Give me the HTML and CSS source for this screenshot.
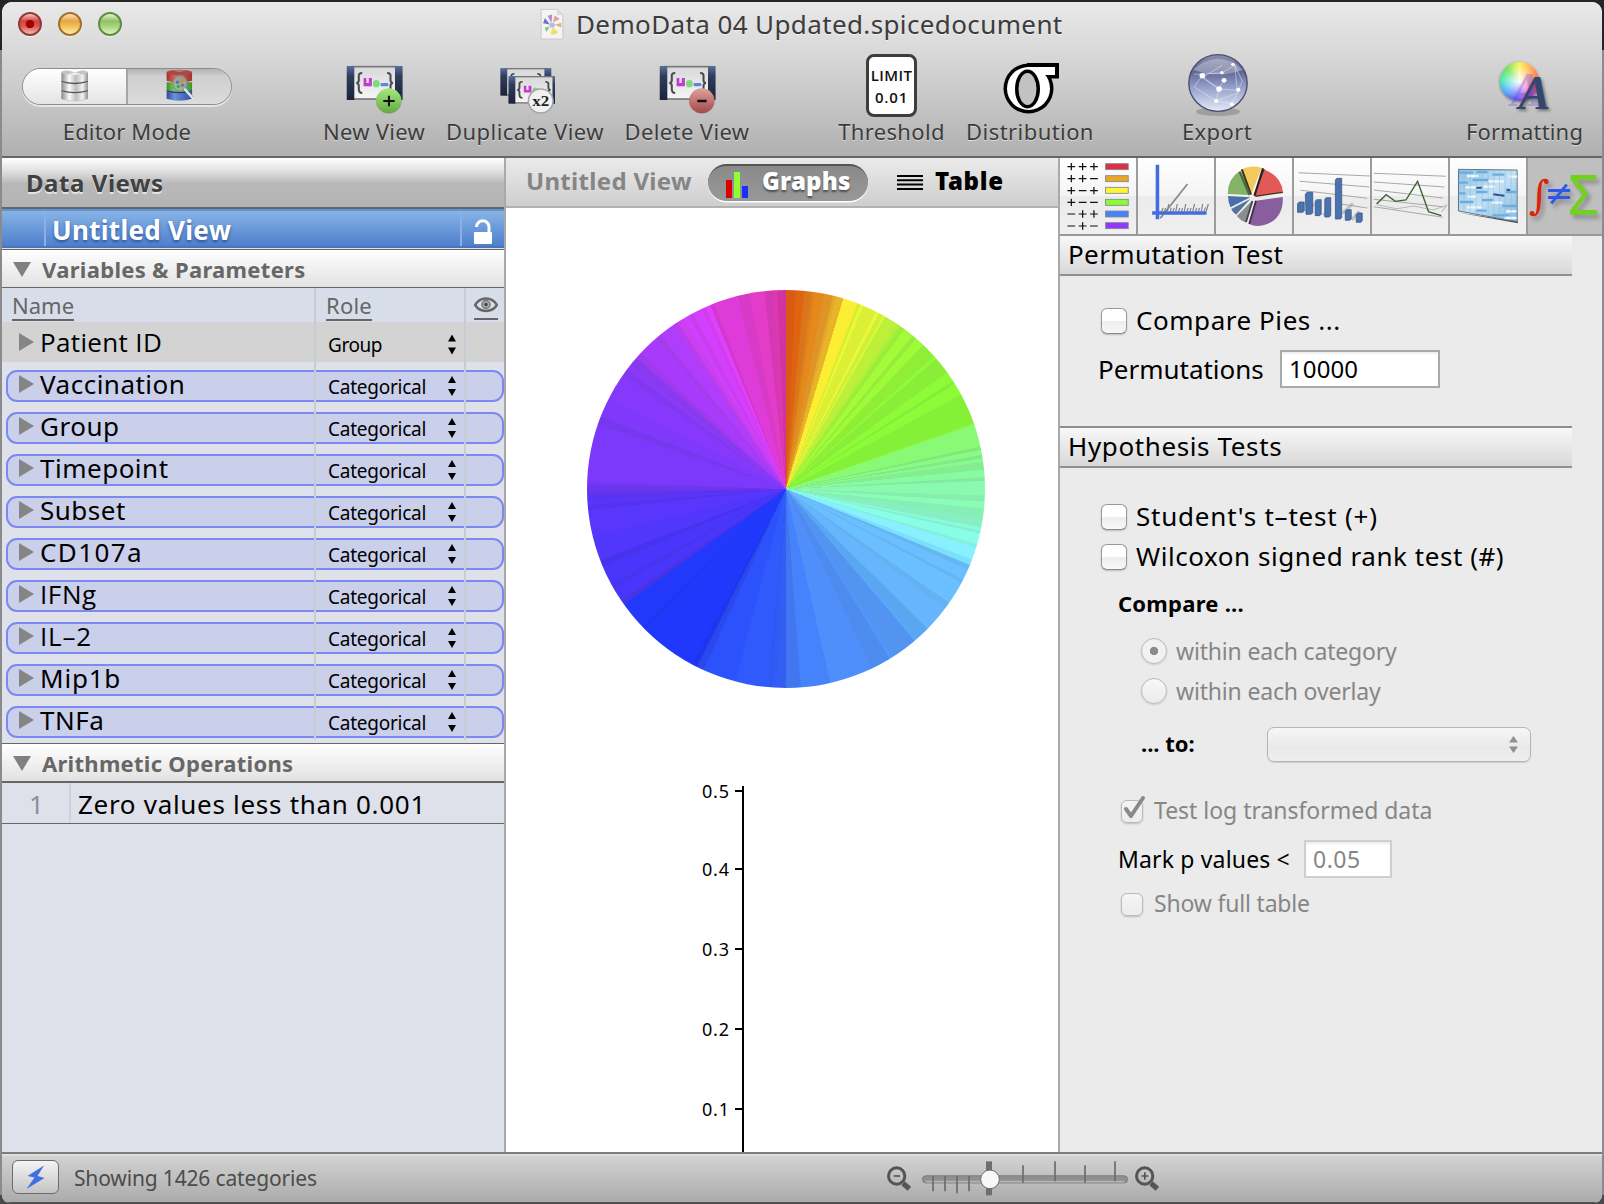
FILE: index.html
```
<!DOCTYPE html>
<html lang="en">
<head>
<meta charset="utf-8">
<title>DemoData 04 Updated.spicedocument</title>
<link rel="stylesheet" href="styles.css">
</head>
<body>
<svg class="defs" width="0" height="0" aria-hidden="true">
  <defs>
    <linearGradient id="navy" x1="0" x2="0" y1="0" y2="1"><stop offset="0" stop-color="#5b6f98"/><stop offset=".3" stop-color="#2e3d5e"/><stop offset="1" stop-color="#1b2338"/></linearGradient>
    <linearGradient id="paper" x1="0" x2="0" y1="0" y2="1"><stop offset="0" stop-color="#d8d8da"/><stop offset="1" stop-color="#f6f6f6"/></linearGradient>
    <linearGradient id="green" x1="0" x2="0" y1="0" y2="1"><stop offset="0" stop-color="#a4ea7c"/><stop offset="1" stop-color="#66a944"/></linearGradient>
    <linearGradient id="rose" x1="0" x2="0" y1="0" y2="1"><stop offset="0" stop-color="#e2a09c"/><stop offset="1" stop-color="#a04b4a"/></linearGradient>
    <linearGradient id="steel" x1="0" x2="1" y1="0" y2="0"><stop offset="0" stop-color="#8a8a8a"/><stop offset=".3" stop-color="#fafafa"/><stop offset=".55" stop-color="#bdbdbd"/><stop offset=".8" stop-color="#f2f2f2"/><stop offset="1" stop-color="#8d8d8d"/></linearGradient>
    <linearGradient id="cred" x1="0" x2="1" y1="0" y2="0"><stop offset="0" stop-color="#a52f2b"/><stop offset=".3" stop-color="#d8605a"/><stop offset="1" stop-color="#a9322e"/></linearGradient>
    <linearGradient id="cgreen" x1="0" x2="1" y1="0" y2="0"><stop offset="0" stop-color="#3c8f2b"/><stop offset=".3" stop-color="#74cf52"/><stop offset="1" stop-color="#41962e"/></linearGradient>
    <linearGradient id="cblue" x1="0" x2="1" y1="0" y2="0"><stop offset="0" stop-color="#2a4b97"/><stop offset=".3" stop-color="#6d90dc"/><stop offset="1" stop-color="#2c4e9c"/></linearGradient>
    <linearGradient id="globe" x1="0" x2="0" y1="0" y2="1"><stop offset="0" stop-color="#8b8fab"/><stop offset=".3" stop-color="#5f6793"/><stop offset=".55" stop-color="#8f9bc4"/><stop offset="1" stop-color="#e3ebfa"/></linearGradient>
    <linearGradient id="heat" x1="0" x2="1" y1="0" y2="1"><stop offset="0" stop-color="#8fc0e2"/><stop offset=".5" stop-color="#c5e1f3"/><stop offset="1" stop-color="#86bce2"/></linearGradient>
    <g id="view">
      <rect x="1020" y="200" width="130" height="97" fill="url(#paper)" stroke="#77787c" stroke-width="5"/>
      <rect x="1005" y="198" width="22" height="102" fill="url(#navy)"/>
      <rect x="1145" y="198" width="22" height="102" fill="url(#navy)"/>
      <path d="M1050 219q-12 0-10 12v10q0 7-7 8q7 1 7 8v10q0 12 10 12M1122 219q12 0 10 12v10q0 7 7 8q-7 1-7 8v10q0 12-10 12" fill="none" stroke="#4b4b4f" stroke-width="6"/>
      <path d="M1054 234h8v15h7v-15h9v25h-24z" fill="#c33bd0"/>
      <ellipse cx="1091" cy="251" rx="10" ry="11" fill="#7ddc7a"/>
      <rect x="1103" y="249" width="23" height="10" rx="4" fill="#5d86d8"/>
    </g>
  </defs>
</svg>

<div class="window">
  <header class="chrome">
    <div class="titlebar">
      <div class="lights"><i class="light close"></i><i class="light min"></i><i class="light zoom"></i></div>
      <div class="title">
        <svg class="doc" viewBox="158 25 63 95" preserveAspectRatio="none"><path d="M161 29h42l15 16v72h-57z" fill="#f4f4f4" stroke="#bdbdbd" stroke-width="2"/><path d="M203 29v16h15" fill="#ddd" stroke="#c8c8c8"/><path d="M188 70l-10-22 12-4z" fill="#b18bd0"/><path d="M192 69l4-22 14 10z" fill="#e9a1a0"/><path d="M184 74l-18-4 5-15z" fill="#6a74c8"/><path d="M196 75l18-6v14z" fill="#e5b27c"/><path d="M184 80l-14 4 5 12z" fill="#84c37c"/><path d="M190 82l-4 20q12 6 20-6z" fill="#ece06a"/><ellipse cx="190" cy="76" rx="7" ry="7" fill="#b4bbe4"/></svg>
        <span class="title-text">DemoData 04 Updated.spicedocument</span>
      </div>
    </div>
    <div class="toolbar">
      <div class="tool t-mode">
        <div class="segment">
          <div class="seg">
            <svg class="db" viewBox="176 204 88 98" preserveAspectRatio="none"><path d="M180 282v12q39 12 78 0v-18z" fill="#777" opacity=".35"/><path d="M180 270v22q39 12 78 0v-22z" fill="url(#steel)"/><path d="M180 243v23q39 12 78 0v-23z" fill="url(#steel)"/><path d="M180 214v25q39 12 78 0v-25z" fill="url(#steel)"/><path d="M180 241q39 12 78 0M180 268q39 12 78 0" stroke="#555" stroke-width="4" fill="none"/><ellipse cx="219" cy="214" rx="39" ry="8" fill="#c4c4c4"/><path d="M219 214l-24-7h48z" fill="#fff"/><path d="M219 214l-22 7h44z" fill="#f3f3f3"/></svg>
          </div>
          <div class="seg on">
            <svg class="db" viewBox="472 204 92 98" preserveAspectRatio="none"><path d="M477 270v22q39 12 78 0v-22z" fill="url(#cblue)"/><path d="M477 243v23q39 12 78 0v-23z" fill="url(#cgreen)"/><path d="M477 214v25q39 12 78 0v-25z" fill="url(#cred)"/><path d="M477 268q39 12 78 0" stroke="#263a63" stroke-width="4" fill="none"/><ellipse cx="516" cy="214" rx="39" ry="8" fill="#a54b47"/><path d="M516 214l-24-7h48z" fill="#c86e69"/><ellipse cx="518" cy="247" rx="21" ry="23" fill="#9db8ac" fill-opacity=".75" stroke="#8c8f8f" stroke-width="4"/><circle cx="510" cy="243" r="5" fill="#4d6fc0"/><circle cx="523" cy="239" r="5" fill="#d08a38"/><circle cx="526" cy="252" r="5" fill="#b84cb0"/><circle cx="513" cy="256" r="5" fill="#4aa54e"/><path d="M534 265l24 26" stroke="#d6e6ee" stroke-width="8" stroke-linecap="round"/><path d="M538 262l22 26" stroke="#7a93a0" stroke-width="2"/></svg>
          </div>
        </div>
        <span class="label l-mode">Editor Mode</span>
      </div>
      <div class="tool t-new">
        <svg class="ico v-new" viewBox="1000 192 174 150" preserveAspectRatio="none"><use href="#view"/><ellipse cx="1127" cy="304" rx="37" ry="37" fill="#000" opacity=".2"/><ellipse cx="1127" cy="302" rx="37" ry="37" fill="url(#green)"/><path d="M1111 303h33M1127.500 287v32" stroke="#111" stroke-width="6"/></svg>
        <span class="label l-new">New View</span>
      </div>
      <div class="tool t-dup">
        <svg class="ico v-dup" viewBox="46 198 148 147" preserveAspectRatio="none"><g transform="translate(-769 44) scale(.817 .81)"><use href="#view"/></g><g transform="translate(-748 68) scale(.817 .81)"><use href="#view"/></g><ellipse cx="157" cy="303" rx="32" ry="36" fill="#f1f1f1" stroke="#a5a5a5" stroke-width="4"/><text x="157" y="317" text-anchor="middle" font-family="Liberation Serif, serif" font-weight="700" font-size="44" textLength="44" lengthAdjust="spacingAndGlyphs" fill="#222">x2</text></svg>
        <span class="label l-dup">Duplicate View</span>
      </div>
      <div class="tool t-del">
        <svg class="ico v-new" viewBox="1000 192 174 150" preserveAspectRatio="none"><use href="#view"/><ellipse cx="1127" cy="304" rx="37" ry="37" fill="#000" opacity=".2"/><ellipse cx="1127" cy="302" rx="37" ry="37" fill="url(#rose)"/><path d="M1114 303h27" stroke="#111" stroke-width="7"/></svg>
        <span class="label l-del">Delete View</span>
      </div>
      <div class="tool t-thr">
        <div class="limit"><span>LIMIT</span><span class="limit-num">0.01</span></div>
        <span class="label l-thr">Threshold</span>
      </div>
      <div class="tool t-dist">
        <svg class="ico v-sigma" viewBox="0 0 60 54"><rect x="24" y="1" width="32" height="15.500"/><ellipse cx="25.500" cy="26.500" rx="25" ry="25"/><rect x="24" y="5" width="28" height="8" fill="#fff"/><ellipse cx="25.500" cy="26.500" rx="21.500" ry="21.500" fill="#fff"/><ellipse cx="24.500" cy="27" rx="12.500" ry="19.500"/><ellipse cx="24.500" cy="27" rx="9" ry="16" fill="#c2c2c2"/></svg>
        <span class="label l-dist">Distribution</span>
      </div>
      <div class="tool t-exp">
        <svg class="ico v-globe" viewBox="385 158 180 192" preserveAspectRatio="none"><ellipse cx="475" cy="334" rx="62" ry="13" fill="#000" opacity=".18"/><ellipse cx="475" cy="248" rx="82" ry="85" fill="url(#globe)" stroke="#4b4e73" stroke-width="4"/><path d="M405 208q70-66 140 0q-70 28-140 0" fill="#fff" opacity=".3"/><path d="M408 222l78-4 36-24 22 50-14 26-52-4-48-34 56-36M430 228l48 38-8 36 60-24-8-84M492 240l-14 26M430 228l-22 32 62 42 44 8 20-40" fill="none" stroke="#e6ebfb" stroke-width="2" opacity=".75"/><g fill="#fff"><circle cx="431" cy="226" r="8"/><circle cx="486" cy="217" r="5"/><circle cx="492" cy="240" r="7"/><circle cx="478" cy="266" r="8"/><circle cx="532" cy="268" r="6"/><circle cx="470" cy="302" r="6"/><circle cx="517" cy="192" r="5"/><circle cx="514" cy="312" r="6"/></g></svg>
        <span class="label l-exp">Export</span>
      </div>
      <div class="tool t-fmt">
        <div class="swatch"><i class="wheel"></i><span class="glyph">A</span></div>
        <span class="label l-fmt">Formatting</span>
      </div>
    </div>
  </header>

  <main class="panes">
    <aside class="sidebar">
      <h2 class="views-head">Data Views</h2>
      <div class="view-row"><span class="vr-pad"></span><span class="vr-name">Untitled View</span><span class="vr-lock"><svg width="20" height="26" viewBox="0 0 20 26"><path d="M3.500 8a6 6 0 0 1 12.500 0v6" fill="none" stroke="#fff" stroke-width="3"/><rect x="1" y="13" width="18" height="12" rx="1" fill="#fff"/></svg></span></div>
      <h3 class="group-head var-head"><i class="tri-down"></i><span>Variables &amp; Parameters</span></h3>
      <div class="table">
        <div class="row head"><span class="name"><u>Name</u></span><span class="role"><u>Role</u></span><span class="eye"><svg width="24" height="16" viewBox="0 0 24 16"><path d="M1 8Q5 1.500 12 1.500T23 8Q19 14 12 14T1 8z" fill="none" stroke="#666" stroke-width="2.500"/><circle cx="12" cy="7.500" r="4" fill="#aaa" stroke="#777" stroke-width="1.500"/><circle cx="12" cy="7.500" r="1.700" fill="#444"/></svg></span></div>
        <div class="row patient"><span class="name plain"><i class="tri"></i>Patient ID</span><span class="role">Group<i class="step"></i></span><span class="eye"></span></div>
        <div class="row pill"><span class="name"><i class="tri"></i>Vaccination</span><span class="role">Categorical<i class="step"></i></span><span class="eye"></span></div>
        <div class="row pill"><span class="name"><i class="tri"></i>Group</span><span class="role">Categorical<i class="step"></i></span><span class="eye"></span></div>
        <div class="row pill"><span class="name"><i class="tri"></i>Timepoint</span><span class="role">Categorical<i class="step"></i></span><span class="eye"></span></div>
        <div class="row pill"><span class="name"><i class="tri"></i>Subset</span><span class="role">Categorical<i class="step"></i></span><span class="eye"></span></div>
        <div class="row pill"><span class="name digits"><i class="tri"></i>CD107a</span><span class="role">Categorical<i class="step"></i></span><span class="eye"></span></div>
        <div class="row pill"><span class="name ifn"><i class="tri"></i>IFNg</span><span class="role">Categorical<i class="step"></i></span><span class="eye"></span></div>
        <div class="row pill"><span class="name il"><i class="tri"></i>IL–2</span><span class="role">Categorical<i class="step"></i></span><span class="eye"></span></div>
        <div class="row pill"><span class="name mip"><i class="tri"></i>Mip1b</span><span class="role">Categorical<i class="step"></i></span><span class="eye"></span></div>
        <div class="row pill"><span class="name"><i class="tri"></i>TNFa</span><span class="role">Categorical<i class="step"></i></span><span class="eye"></span></div>
      </div>
      <h3 class="group-head op-head"><i class="tri-down"></i><span>Arithmetic Operations</span></h3>
      <div class="op"><span class="op-n">1</span><span class="op-t">Zero values less than 0.001</span></div>
    </aside>

    <section class="center">
      <div class="modes">
        <span class="m-title">Untitled View</span>
        <span class="m-graphs"><svg width="22" height="26" viewBox="0 0 22 26"><path d="M0 8h6v18H0z" fill="#d90000"/><path d="M8 0h6v26H8z" fill="#8dff34"/><path d="M16 14h6v12h-6z" fill="#1b2eff"/></svg><b>Graphs</b></span>
        <span class="m-table"><svg width="26" height="15" viewBox="0 0 26 15"><path d="M0 1h26M0 5.300h26M0 9.600h26M0 13.900h26" stroke="#000" stroke-width="2"/></svg><b>Table</b></span>
      </div>
      <div class="pie"></div>
      <div class="axis">
        <div class="ticks"><span>0.5</span><span>0.4</span><span>0.3</span><span>0.2</span><span>0.1</span></div>
        <svg width="10" height="366" viewBox="0 0 10 366"><path d="M8 0v366M0 5h8M0 83h8M0 163h8M0 243h8M0 323h8" stroke="#000" stroke-width="2" fill="none"/></svg>
      </div>
    </section>

    <aside class="inspector">
      <nav class="tabs">
        <span class="tab"><svg viewBox="28 474 215 228" preserveAspectRatio="none"><path d="M49 500h22M81 500h22M113 500h22M60 489v22M92 489v22M124 489v22M49 536h22M81 536h22M113 536h22M60 525v22M92 525v22M49 572h22M81 572h22M113 572h22M60 561v22M124 561v22M49 607h22M81 607h22M113 607h22M60 596v22M49 642h22M81 642h22M113 642h22M92 631v22M124 631v22M49 678h22M81 678h22M113 678h22M92 667v22" stroke="#111" stroke-width="3.500"/><g stroke="#86868a" stroke-width="2.500"><rect x="157" y="491" width="64" height="18" fill="#dc2f45"/><rect x="157" y="527" width="64" height="18" fill="#eba52a"/><rect x="157" y="562" width="64" height="18" fill="#fdf43b"/><rect x="157" y="598" width="64" height="18" fill="#89fb37"/><rect x="157" y="633" width="64" height="18" fill="#4684fb"/><rect x="157" y="668" width="64" height="18" fill="#9138fb"/></g></svg></span>
        <span class="tab"><svg viewBox="245 474 215 228" preserveAspectRatio="none"><path d="M308 655L385 552" stroke="#8b8b8b" stroke-width="5"/><path d="M312 634l4-10M320 634l3-10M328 634l4-22M336 634l3-10M344 634l3-10M352 634l4-22M360 634l3-10M368 634l3-10M376 634l4-22M384 634l3-10M392 634l3-10M400 634l5-22M408 634l3-10M416 634l3-10M424 634l4-22M432 634l4-12M438 634l6-22" stroke="#858585" stroke-width="3.500"/><path d="M300 494v164M285 639h154" stroke="#426de0" stroke-width="10"/></svg></span>
        <span class="tab"><svg viewBox="467 474 215 228" preserveAspectRatio="none"><g stroke-linejoin="round"><path d="M566 584L540 508q28-14 56-4z" fill="#f3c85c"/><path d="M540 508L566 584M604 508L576 586M656 576L578 588" stroke="#3c3420" stroke-width="6"/><path d="M561 585L533 514q-32 22-33 68z" fill="#82b366"/><path d="M534 515l28 70" stroke="#486a36" stroke-width="7"/><path d="M576 587L604 509q48 20 52 66z" fill="#e15a58"/><path d="M576 587L600 505" stroke="#33201e" stroke-width="6"/><path d="M580 602L656 591q2 62-46 82q-28 10-49-1z" fill="#895e9f"/><path d="M580 602L561 672" stroke="#3d2b48" stroke-width="5"/><path d="M564 592L501 588q0 18 7 34z" fill="#4a6fa8"/><path d="M564 597L510 627q4 10 14 17z" fill="#54739f"/><path d="M569 602L526 648q10 14 26 20z" fill="#8b8e8c"/><path d="M570 603L552 666" stroke="#444" stroke-width="5"/></g></svg></span>
        <span class="tab"><svg viewBox="687 474 215 228" preserveAspectRatio="none"><path d="M700 518l202 10M703 544l197 17M706 571l188 24M820 612l74 12" stroke="#a9a9a9" stroke-width="3"/><path d="M720 632l24-20M770 646l20-22M824 640l30-30M850 660l22-26" stroke="#999" stroke-width="9" opacity=".5"/><g fill="#4a73ae" stroke="#2f4d80" stroke-width="2"><path d="M697 611l5-5h14v27l-4 4h-15zM719 582l5-5h16v62l-5 4h-14zM747 604l4-5h13v43l-4 5h-13zM774 598l4-5h13v53l-4 5h-13zM804 540l4-5h14v118l-4 4h-14zM832 634l4-5h13v27l-4 5h-13zM863 644l4-5h13v24l-4 4h-13z"/></g></svg></span>
        <span class="tab"><svg viewBox="909 474 215 228" preserveAspectRatio="none"><path d="M914 520l204 9M914 546l200 15M914 570l196 24M914 598l196 22M914 620l196 32" stroke="#a9a9a9" stroke-width="3"/><path d="M924 614l54 12 50-8 54 12 38-14-14 20" stroke="#b9b9b9" stroke-width="3" fill="none"/><path d="M922 612l27-28 26 20 30-4 33-56 31 91 36 12" fill="none" stroke="#426233" stroke-width="4"/></svg></span>
        <span class="tab"><svg viewBox="1132 474 215 228" preserveAspectRatio="none"><path d="M1158 638l166 32v-6z" fill="#555"/><path d="M1156 508l166 2v155l-166-32z" fill="url(#heat)" stroke="#49667c" stroke-width="2.500"/><path d="M1157 518h40M1208 516h30M1252 524h34M1157 548h26M1196 540h44M1158 580h18M1206 576h32M1290 576h31M1160 606h38M1222 600h32M1280 618h40M1206 632h30M1252 646h48" stroke="#6aace0" stroke-width="7"/><path d="M1180 528h32M1240 544h44M1176 562h40M1228 560h32M1182 590h26M1250 608h30M1180 622h44M1290 634h30M1286 654h34M1300 530h22" stroke="#eff8fd" stroke-width="7"/><path d="M1254 583l32 4M1206 563h16M1292 569l10 1" stroke="#2b4e93" stroke-width="6"/><path d="M1172 508v127M1189 508v131M1206 509v133M1223 509v136M1240 509v139M1256 509v143M1272 510v145M1288 510v149M1305 510v152" stroke="#7fb3da" stroke-width="1.200"/></svg></span>
        <span class="tab on"><span class="sym s-int">∫</span><span class="sym s-ne">≠</span><span class="sym s-sum">Σ</span></span>
      </nav>
      <h2 class="sec">Permutation Test</h2>
      <div class="line f-pies"><i class="box"></i><span class="big">Compare Pies ...</span></div>
      <div class="line f-perm"><span class="perm-l">Permutations</span><span class="field">10000</span></div>
      <h2 class="sec hyp">Hypothesis Tests</h2>
      <div class="line f-stu"><i class="box"></i><span class="stu">Student's t–test (+)</span></div>
      <div class="line f-wil"><i class="box"></i><span class="wil">Wilcoxon signed rank test (#)</span></div>
      <div class="line f-cmp"><b>Compare ...</b></div>
      <div class="line f-rad first"><i class="radio on"></i><span class="dim">within each category</span></div>
      <div class="line f-rad"><i class="radio"></i><span class="dim">within each overlay</span></div>
      <div class="line f-to"><b>... to:</b><span class="popup"><svg width="9" height="17" viewBox="0 0 9 17"><path d="M4.500 0L9 6.500H0zM0 10.500h9L4.500 17z" fill="#8f8f8f"/></svg></span></div>
      <div class="line f-log"><i class="box sm"><svg class="check" width="24" height="26" viewBox="0 0 24 26"><path d="M3 14l5 7L20 3" fill="none" stroke="#8a8a8a" stroke-width="4" stroke-linecap="round" stroke-linejoin="round"/></svg></i><span class="dim log">Test log transformed data</span></div>
      <div class="line f-mark"><span class="mark">Mark p values &lt;</span><span class="field off">0.05</span></div>
      <div class="line f-full"><i class="box sm"></i><span class="dim">Show full table</span></div>
    </aside>
  </main>

  <footer class="status">
    <span class="bolt"><svg width="20" height="25" viewBox="0 0 20 25"><path d="M18 0.500L1.500 11l7 1.500L0.500 24 18.500 13l-7-2z" fill="#3f6fe4"/></svg></span>
    <span class="showing">Showing 1426 categories</span>
    <svg class="slider" width="276" height="40" viewBox="78 50 828 120">
      <g fill="none" stroke="#555"><circle cx="110" cy="110" r="24.500" stroke-width="9"/><path d="M101 110h19" stroke-width="5"/><path d="M129 132l19 16" stroke-width="16"/><circle cx="854" cy="110" r="24.500" stroke-width="9"/><path d="M844 110h21M854.500 99v22" stroke-width="5"/><path d="M873 132l19 16" stroke-width="16"/></g>
      <rect x="187" y="109" width="616" height="22" rx="11" fill="#8f8f8f" stroke="#707070" stroke-width="2"/>
      <path d="M197 127h596" stroke="#b5b5b5" stroke-width="5"/>
      <path d="M219 110v46M255 110v46M291 110v52M327 110v46M489 78v52M585 66v60M675 78v52M765 66v60" stroke="#6b6b6b" stroke-width="5"/>
      <path d="M387 66v102" stroke="#6e6e6e" stroke-width="18"/>
      <circle cx="390" cy="120" r="28" fill="#f8f8f8" stroke="#6a6a6a" stroke-width="3"/>
    </svg>
  </footer>
</div>
</body>
</html>
```
FILE: styles.css
```
*, *::before { box-sizing: border-box; }
html, body { margin: 0; }
body {
  width: 1604px; height: 1204px; overflow: hidden; padding: 2px;
  background: linear-gradient(#262424 0 50px, #8b8b8b 50px 1195px, #4a4a4a 1195px);
  font-family: "Noto Sans", "Open Sans", sans-serif; font-size: 26px; color: #000;
}
h2, h3 { margin: 0; }
i { display: block; font-style: normal; }
.defs { position: absolute; }
.window { width: 1600px; height: 1201px; border-radius: 10px 10px 8px 8px; overflow: hidden; display: flex; flex-direction: column; background: #ebebeb; }

/* title bar and toolbar */
.chrome { height: 156px; flex: none; background: linear-gradient(#e9e9e9, #cfcfcf 50%, #b0b0b0); border-bottom: 2px solid #666; color: #3c3c3c; }
.titlebar { height: 46px; display: flex; align-items: flex-start; }
.lights { display: flex; gap: 16px; padding: 10px 0 0 16px; width: 538px; }
.light { width: 24px; height: 24px; border-radius: 50%; border: 2px solid; box-shadow: 0 1px 1px #fff9; }
.close { border-color: #8f3b38; background: radial-gradient(circle at 50% 50%, #a30000 0 4px, transparent 4.500px), linear-gradient(#f6c9c4, #d6423d 35%, #d9544e 60%, #f3bcb8); }
.min { border-color: #a4702e; background: linear-gradient(#fbe6bc, #e5a443 35%, #efbf57 60%, #fdf0a5); }
.zoom { border-color: #5f8d41; background: linear-gradient(#e3f6cf, #8fc266 35%, #a6d27c 60%, #dff5bd); }
.title { display: flex; align-items: flex-start; padding-top: 6px; }
.doc { width: 24px; height: 32px; margin-right: 12px; }
.title-text { font-size: 26px; line-height: 32px; letter-spacing: .38px; text-shadow: 0 1px 0 #fff8; white-space: nowrap; }
.toolbar { height: 108px; display: flex; padding-left: 20px; }
.tool { display: flex; flex-direction: column; align-items: center; flex: none; height: 100px; }
.label { margin-top: auto; line-height: 30px; height: 32px; flex: none; font-size: 22px; white-space: nowrap; text-shadow: 0 1px 0 #fff8; }
.t-mode { width: 210px; }
.t-new { width: 102px; margin-left: 91px; }
.t-dup { width: 158px; margin-left: 21px; }
.t-del { width: 124px; margin-left: 21px; }
.t-thr { width: 105px; margin-left: 90px; }
.t-dist { width: 126px; margin-left: 23px; }
.t-exp { width: 70px; margin-left: 89px; }
.t-fmt { width: 115px; margin-left: 215px; }
.l-mode { letter-spacing: .15px; }
.l-new { letter-spacing: .3px; }
.l-dup { letter-spacing: .45px; }
.l-del { letter-spacing: .38px; }
.l-thr { letter-spacing: .33px; }
.l-dist { letter-spacing: .43px; }
.l-exp { letter-spacing: .4px; }
.l-fmt { letter-spacing: .18px; }
.segment { width: 210px; height: 37px; margin-top: 20px; border-radius: 19px; border: 1.500px solid #8d8d8d; display: flex; overflow: hidden; box-shadow: 0 2px 0 #e6e6e6; }
.seg { flex: 1; display: flex; justify-content: center; background: linear-gradient(#fff, #e4e4e4); }
.seg.on { background: linear-gradient(#b3b3b3, #cfcfcf 20%, #dcdcdc); border-left: 2px solid #a5a5a5; }
.db { width: 30px; height: 33px; }
.ico { flex: none; margin-bottom: -8px; }
.v-new { width: 60px; height: 50px; margin-top: 16px; margin-left: 1px; }
.v-dup { width: 57px; height: 49px; margin-top: 18px; margin-left: 2px; }
.limit { width: 51px; height: 63px; margin: 6px 0 -2px; flex: none; border: 3px solid #3d3d3d; border-radius: 8px; background: #fff; display: flex; flex-direction: column; align-items: center; justify-content: center; font: 600 15px/22px "Open Sans", sans-serif; letter-spacing: .4px; color: #111; }
.limit-num { letter-spacing: .8px; }
.v-sigma { width: 60px; height: 54px; margin-top: 14px; margin-left: 5px; }
.v-globe { width: 64px; height: 64px; margin-top: 5px; margin-left: 2px; }
.swatch { position: relative; flex: none; width: 60px; height: 56px; margin-top: 11px; }
.wheel { width: 39px; height: 39px; margin: 3px 0 0 5px; border-radius: 50%; background: radial-gradient(circle, #fff 0, #fff0 70%), conic-gradient(#fff04a, #ff8a3c 60deg, #f3405a 100deg, #c83ee8 150deg, #5a49f4 190deg, #3fa8ff 235deg, #45e8b0 275deg, #62e34a 315deg, #fff04a); box-shadow: 0 1px 3px #0007; }
.glyph { position: absolute; left: 24px; top: 12px; font: italic 700 48px/44px "Liberation Serif", serif; color: #33466e; text-shadow: -8px -3px 0 #5b4fd455, 2px 2px 3px #0006; }

/* panes */
.panes { flex: 1; display: flex; min-height: 0; }
.sidebar { width: 504px; flex: none; border-right: 2px solid #a9a9a9; background: #dee1e9; }
.views-head { height: 51px; padding-left: 24px; font-size: 24px; line-height: 49px; letter-spacing: .55px; color: #414141; border-bottom: 2px solid #666; background: linear-gradient(#fff, #dcdcdc 30%, #b8b8b8 52%, #b4b4b4); text-shadow: 0 2px 0 #e4e4e4; }
.view-row { height: 39px; display: flex; background: linear-gradient(#86b4e6, #4f7fcd); border-top: 2px solid #5f94d6; border-bottom: 2px solid #4a74b8; color: #fff; font-weight: 700; }
.vr-pad { width: 44px; border-right: 2px solid #8db0e2; }
.vr-name { flex: 1; padding-left: 6px; line-height: 39px; letter-spacing: .3px; text-shadow: 0 2px 3px #1c3f80aa; }
.vr-lock { width: 44px; border-left: 2px solid #8db0e2; display: flex; padding: 8px 0 0 11px; }
.group-head { display: flex; align-items: center; padding-left: 11px; gap: 11px; font-size: 22px; color: #676767; background: linear-gradient(#fff, #e2e2e2); border-top: 1px solid #666; border-bottom: 1px solid #666; }
.var-head { height: 39px; letter-spacing: .31px; margin-top: 1px; }
.op-head { height: 40px; border-bottom-width: 2px; letter-spacing: .28px; }
.tri-down { width: 18px; height: 15px; margin-top: 2px; background: #808080; clip-path: polygon(0 0, 100% 0, 50% 100%); }
.table { height: 455px; }
.row { height: 42px; display: grid; grid-template-columns: 312px 150px 40px; position: relative; }
.row > span { position: relative; display: flex; align-items: center; white-space: nowrap; }
.name { letter-spacing: .5px; padding-top: 2px; }
.name.digits { letter-spacing: 1.400px; }
.name.mip { letter-spacing: .8px; }
.name.plain { font-family: "Open Sans", sans-serif; letter-spacing: .35px; padding-top: 0; }
.name.ifn, .name.il { font-family: "Open Sans", sans-serif; letter-spacing: .6px; }
.name.il { letter-spacing: .8px; }
.role { border-left: 2px solid #c9ccd4; padding: 7px 0 0 12px; font-size: 19px; letter-spacing: -.25px; }
.eye { border-left: 2px solid #c9ccd4; }
.tri { width: 15px; height: 18px; margin: 0 6px 0 17px; background: #858585; clip-path: polygon(0 0, 100% 50%, 0 100%); }
.step { width: 8px; height: 20px; margin: 0 8px 1px auto; background: #000; clip-path: polygon(50% 0, 100% 35%, 0 35%, 50% 0, 50% 100%, 100% 65%, 0 65%, 50% 100%); }
.row.head { height: 34px; background: #d8dee9; color: #666; font-size: 22px; }
.head .name { padding-left: 10px; letter-spacing: 0; }
.head .role { padding-top: 2px; padding-left: 10px; font-size: 22px; letter-spacing: .2px; }
.head u { text-decoration: none; border-bottom: 2px solid #666; line-height: 28px; height: 30px; }
.head .eye { align-items: flex-start; justify-content: center; padding-left: 1px; }
.head .eye svg { margin-top: 9px; height: 23px; border-bottom: 2px solid #666; padding-bottom: 5px; }
.patient { height: 40px; background: #d3d3d3; }
.patient .role { padding-top: 6px; letter-spacing: -.45px; }
.pill::before { content: ""; position: absolute; left: 4px; right: 0; top: 8px; height: 32px; border: 2px solid #7c89f1; border-radius: 11px; background: #cacfea; }
.op { height: 41px; display: flex; border-bottom: 1px solid #666; line-height: 42px; }
.op-n { width: 69px; padding-left: 27px; color: #8d8f93; border-right: 2px solid #cfd2d9; }
.op-t { padding-left: 7px; letter-spacing: .7px; white-space: nowrap; }

.center { width: 552px; flex: none; background: #fff; }
.modes { height: 50px; display: flex; border-bottom: 2px solid #b2b2b2; background: linear-gradient(#ebebeb, #cecece); font-size: 24px; line-height: 45px; font-weight: 700; }
.m-title { width: 202px; padding-left: 20px; letter-spacing: .31px; color: #858585; }
.m-graphs { width: 160px; height: 37px; margin-top: 6px; padding-left: 18px; border-radius: 19px; background: linear-gradient(#8a8a8a, #989898); border-top: 2px solid #555; box-shadow: 0 1.500px 0 #fff; color: #fff; display: flex; gap: 14px; line-height: 30px; letter-spacing: .2px; text-shadow: 0 2px 2px #0007; }
.m-graphs svg { margin-top: 6px; }
.m-table { display: flex; gap: 12px; padding-left: 29px; letter-spacing: .7px; }
.m-table svg { margin-top: 17px; }
.pie {
  width: 398px; height: 398px; margin: 82px 0 0 81px; border-radius: 50%;
  background: conic-gradient(
    #d95a12 0 2.500deg, #e06410 3deg 5deg, #d9761c 5.500deg 7deg, #de821c 8deg, #e6891c 9deg 11deg, #de9426 11.200deg 13.500deg, #e6a828 13.800deg 14.500deg, #e8b528 14.700deg 16.700deg,
    #fcee32 16.800deg 20deg, #f4f034 21deg, #dee932 21.200deg 21.800deg, #e6fb33 22deg 22.800deg, #dcee36 23deg 26.800deg, #e6fb38 27deg 27.800deg, #d2ee38 28deg 29.200deg, #d4fb3a 29.300deg 29.900deg, #bef03a 30deg 33deg, #aef03a 34.500deg,
    #9aee38 35.500deg 36.500deg, #a3fb39 36.700deg 39.500deg, #96ec38 39.700deg 40.700deg, #9efb38 41deg 43.500deg, #90ee38 43.700deg 48deg, #90fb38 48.200deg 49deg, #8aee38 49.200deg 54deg, #8efb38 54.200deg 57deg, #86ee38 57.200deg 58deg, #8cfb38 58.200deg 61.500deg, #84f038 61.800deg 70.500deg, #8cf950 71deg,
    #88fa76 71.500deg 77.500deg, #82e67d 77.800deg 78.500deg, #88fb82 78.700deg 80deg, #82e888 80.200deg 81deg, #88fb8c 81.200deg 82deg, #84ec92 82.300deg 84.300deg, #86fba0 84.500deg 86.500deg, #84e8a4 86.800deg 87.500deg, #8bfaae 87.800deg 91.800deg, #86eeae 92deg 93.500deg, #8bfdb6 93.800deg 95.500deg, #86efb6 95.800deg 98deg, #88efc4 99deg 101deg, #88fbd8 101.300deg 102deg, #84eed0 102.300deg 102.800deg, #8afde6 103deg 106deg, #84f0dc 106.200deg 107deg,
    #88f0ff 107.200deg 110.500deg, #7ae0fb 111deg 112.300deg, #66b6f2 112.600deg 113.800deg, #6cbffe 114deg 117deg, #66b4f0 117.200deg 118deg, #6abffe 118.200deg 124.800deg, #64b2f2 125deg 126.800deg, #66b6fe 127deg 134.500deg, #5aa6f0 134.800deg 138.800deg, #58a8fb 139deg 139.600deg,
    #5294f0 139.800deg 147.500deg, #5096fb 147.700deg 148.500deg, #4e8bee 148.700deg 154.300deg, #508efb 154.600deg 167deg, #4682fb 167.200deg 175.500deg, #4276f0 176deg 180deg,
    #335ef0 180deg 182.500deg, #315afb 182.700deg 184deg, #2e58ee 184.200deg 185deg, #305afb 185.200deg 194.500deg, #2c52fb 195deg 204deg, #2a48ee 205deg 206.500deg, #1f35ee 206.800deg 208deg, #1f38fb 208.500deg 225deg, #2036ee 225.200deg 226deg, #2238fb 226.500deg 234.500deg,
    #4834e6 234.700deg 236deg, #4a36fb 236.300deg 239.800deg, #4634ee 240deg 241.300deg, #4a36fb 241.500deg 246.800deg, #4733ee 247deg 249deg, #5136fb 249.200deg 256deg, #5836fb 256.500deg 263.800deg, #5432ee 264deg 265.300deg, #5a34fb 265.500deg 266.800deg, #5834ee 267deg 268deg,
    #6433ee 268.300deg 269.300deg, #6c36ee 269.600deg 271deg, #7c38fb 272.500deg 288.800deg, #7638ee 289deg 291.300deg, #8038fb 291.500deg 297deg, #8638fb 297.500deg 304.800deg, #8238ee 305deg 306.800deg, #8a3afb 307deg 308.300deg, #8a3aee 308.500deg 311deg,
    #a03aee 311.500deg 313deg, #a83afb 313.300deg 319deg, #a43cee 319.300deg 320.500deg, #b03dfb 321deg 325deg, #b83cf0 325.500deg 326.800deg, #ca3fee 327deg 328.800deg, #ce40fb 329deg 330.500deg, #c83eee 330.700deg 332deg, #d43ffd 332.200deg 334.800deg, #ce3eea 335deg 336deg, #e040fb 336.200deg 337.500deg,
    #d038d0 337.700deg 338.500deg, #de3bd8 339deg 345.800deg, #d63ac6 346deg 349.300deg, #e23cc8 349.500deg 353.600deg, #d438b4 353.900deg 356deg, #de38ae 356.200deg 357.400deg, #d233a2 357.600deg 360deg);
}
.axis { display: flex; margin: 98px 0 0 194px; height: 366px; }
.ticks { width: 35px; padding-left: 2px; font-size: 18px; letter-spacing: .8px; }
.ticks span { display: block; height: 80px; line-height: 24px; transform: translateY(-7px); }
.ticks span:first-child { height: 78px; }

/* inspector */
.inspector { width: 544px; flex: none; border-left: 2px solid #a9a9a9; background: #ebebeb; }
.tabs { display: flex; height: 78px; border-bottom: 2px solid #999; }
.tab { width: 78px; border-right: 2px solid #9c9c9c; background: linear-gradient(#fff, #f4f4f4 50%, #ebebeb 50%, #f0f0f0); }
.tab svg { display: block; width: 76px; height: 76px; }
.tab.on { flex: 1; border: 0; background: #bfbfbf; position: relative; }
.sym { position: absolute; line-height: 1; white-space: nowrap; text-shadow: 3px 4px 4px #0004; }
.s-int { left: 1px; top: 17px; font: 40px/1 "DejaVu Serif", serif; color: #dc2208; }
.s-ne { left: 16px; top: 18px; font: 35px/1 "DejaVu Sans", sans-serif; color: #2b57ec; }
.s-sum { left: 40px; top: 8px; font: 54px/1 "Noto Sans", sans-serif; color: #6fd31c; }
.sec { width: 512px; height: 40px; padding-left: 8px; font-size: 26px; font-weight: 400; line-height: 36px; letter-spacing: .38px; border-bottom: 2px solid #8f8f8f; background: linear-gradient(#f8f8f8, #d8d8d8); }
.sec.hyp { height: 42px; margin-top: 38px; letter-spacing: .62px; border-top: 2px solid #8f8f8f; }
.line { display: flex; align-items: center; height: 40px; padding-left: 41px; white-space: nowrap; }
.box { width: 26px; height: 26px; margin: 2px 9px 0 0; flex: none; border: 1.500px solid #9a9a9a; border-bottom-color: #888; border-radius: 6px; background: linear-gradient(#fff 50%, #ededed 50%, #f7f7f7); box-shadow: 0 1px 2px #0003; }
.box.sm { width: 22px; height: 23px; margin-right: 11px; border-color: #bbb; background: linear-gradient(#f4f4f4, #ececec); position: relative; }
.check { position: absolute; left: 1px; top: -6px; }
.radio { width: 26px; height: 26px; margin-right: 9px; flex: none; border: 1.500px solid #b9b9b9; border-radius: 50%; background: linear-gradient(#f7f7f7, #ebebeb); box-shadow: 0 1px 2px #0002; }
.radio.on { background: radial-gradient(circle, #8a8a8a 0 3.800px, #f1f1f1 4.500px); }
.dim { color: #868686; font-size: 23px; letter-spacing: -.18px; }
.dim.log { letter-spacing: -.03px; margin-top: -1px; }
.field { height: 38px; width: 160px; margin-left: 15px; padding-left: 7px; border: 2px solid #a9a9a9; background: #fff; font-size: 24px; line-height: 34px; box-shadow: inset 0 2px 2px #0001; letter-spacing: .1px; }
.field.off { width: 88px; margin-left: 13px; padding-left: 7px; font-size: 23px; border-color: #cfcfcf; color: #868686; letter-spacing: .5px; }
.f-pies { margin-top: 24px; }
.big { letter-spacing: .55px; }
.f-perm { height: 38px; margin-top: 10px; padding-left: 38px; }
.perm-l { width: 167px; }
.f-stu { margin-top: 28px; }
.stu { letter-spacing: .78px; }
.wil { letter-spacing: .55px; }
.f-cmp { height: 26px; margin-top: 14px; padding-left: 58px; font-size: 22px; letter-spacing: .25px; }
.f-rad { padding-left: 81px; }
.f-rad.first { margin-top: 15px; }
.f-to { margin-top: 13px; padding-left: 81px; font-size: 22px; }
.f-to b { width: 126px; margin-top: -2px; }
.popup { width: 264px; height: 35px; border: 1.500px solid #b5b5b5; border-radius: 7px; background: linear-gradient(#f6f6f6, #e9e9e9 60%, #efefef); box-shadow: 0 1px 1px #0002; display: flex; align-items: center; justify-content: flex-end; padding-right: 12px; }
.f-log { margin-top: 26px; padding-left: 61px; }
.f-mark { margin-top: 9px; padding-left: 58px; font-size: 23px; }
.mark { width: 173px; letter-spacing: .16px; }
.f-full { margin-top: 4px; padding-left: 61px; }

/* status bar */
.status { height: 51px; flex: none; display: flex; border-top: 2px solid #7d7d7d; border-bottom: 1px solid #555; background: linear-gradient(#dedede 0 2px, #d2d2d2 2px, #ababab); }
.bolt { width: 47px; height: 34px; margin: 6px 15px 0 10px; border: 1.500px solid #6c6c6c; border-radius: 6px; background: linear-gradient(#f4f4f4, #c4c4c4); display: flex; align-items: center; justify-content: center; }
.showing { width: 812px; font-size: 21px; line-height: 49px; letter-spacing: -.16px; color: #4c4c4c; }
.slider { margin-top: 2px; }
```
